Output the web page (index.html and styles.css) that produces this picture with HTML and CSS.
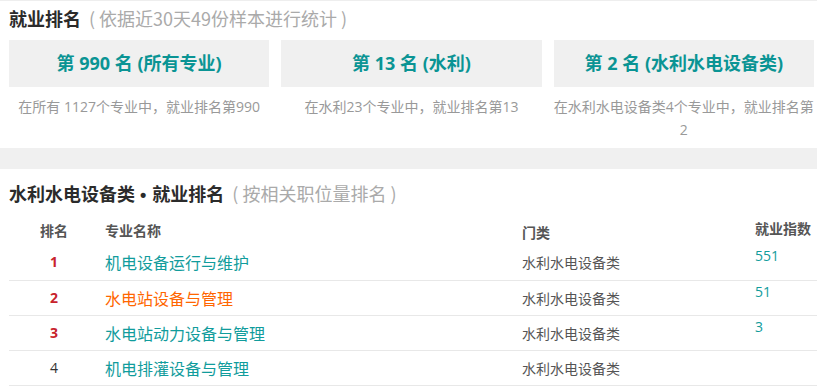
FILE: index.html
```html
<!DOCTYPE html>
<html lang="zh-CN">
<head>
<meta charset="utf-8">
<title>就业排名</title>
<link rel="stylesheet" href="styles.css">
</head>
<body>
<section class="rank-summary">
  <h2 class="sec-title">就业排名<span class="sec-sub">( 依据近30天49份样本进行统计 )</span></h2>
  <div class="cards">
    <div class="card">
      <div class="card-head">第 990 名 (所有专业)</div>
      <p class="card-desc">在所有 1127个专业中，就业排名第990</p>
    </div>
    <div class="card">
      <div class="card-head">第 13 名 (水利)</div>
      <p class="card-desc">在水利23个专业中，就业排名第13</p>
    </div>
    <div class="card">
      <div class="card-head">第 2 名 (水利水电设备类)</div>
      <p class="card-desc">在水利水电设备类4个专业中，就业排名第2</p>
    </div>
  </div>
</section>
<div class="band"></div>
<section class="rank-list">
  <h2 class="sec-title">水利水电设备类<span class="dot">•</span>就业排名<span class="sec-sub">( 按相关职位量排名 )</span></h2>
  <table class="rank-table">
    <colgroup>
      <col class="c-rank"><col class="c-name"><col class="c-cat"><col class="c-idx">
    </colgroup>
    <thead>
      <tr>
        <th class="th-rank">排名</th>
        <th class="th-name">专业名称</th>
        <th class="th-cat">门类</th>
        <th class="th-idx">就业指数</th>
      </tr>
    </thead>
    <tbody>
      <tr>
        <td class="rank top">1</td>
        <td class="name"><a>机电设备运行与维护</a></td>
        <td class="cat">水利水电设备类</td>
        <td class="idx">551</td>
      </tr>
      <tr>
        <td class="rank top">2</td>
        <td class="name"><a class="hover">水电站设备与管理</a></td>
        <td class="cat">水利水电设备类</td>
        <td class="idx">51</td>
      </tr>
      <tr>
        <td class="rank top">3</td>
        <td class="name"><a>水电站动力设备与管理</a></td>
        <td class="cat">水利水电设备类</td>
        <td class="idx">3</td>
      </tr>
      <tr>
        <td class="rank">4</td>
        <td class="name"><a>机电排灌设备与管理</a></td>
        <td class="cat">水利水电设备类</td>
        <td class="idx"></td>
      </tr>
    </tbody>
  </table>
</section>
</body>
</html>
```

FILE: styles.css
```css
html, body {
  margin: 0;
  padding: 0;
  background: #fff;
}
body {
  width: 817px;
  overflow: hidden;
  font-family: "Open Sans", "Noto Sans CJK SC", sans-serif;
  color: #333;
  border-top: 1px solid #eeeeee;
}
.sec-title {
  margin: 0;
  padding-left: 9px;
  font-size: 18px;
  line-height: 24px;
  font-weight: bold;
  color: #2b2b2b;
  font-family: "Noto Sans CJK SC", sans-serif;
}
.dot {
  font-family: "Liberation Sans", sans-serif;
  margin: 0 6px 0 5px;
}
.sec-sub {
  font-weight: normal;
  color: #aaa;
  margin-left: 8px;
  font-size: 18px;
}
.rank-summary .sec-title {
  padding-top: 5px;
}
.cards {
  display: grid;
  grid-template-columns: repeat(3, 1fr);
  column-gap: 12px;
  padding: 0 3px 0 9px;
  margin-top: 10px;
}
.card-head {
  height: 47px;
  line-height: 47px;
  background: #f0f0f0;
  text-align: center;
  font-size: 18px;
  font-weight: bold;
  color: #0a9494;
}
.card-desc {
  margin: 8px 0 7px;
  font-size: 14px;
  line-height: 23px;
  color: #999;
  text-align: center;
}
.band {
  height: 21px;
  background: #f0f0f0;
}
.rank-list .sec-title {
  padding-top: 12px;
}
.rank-table {
  margin: 8px 0 0 9px;
  width: 808px;
  border-collapse: collapse;
  table-layout: fixed;
  font-family: "Noto Sans CJK SC", sans-serif;
}
.c-rank { width: 90px; }
.c-name { width: 417px; }
.c-cat { width: 233px; }
.c-idx { width: 68px; }
.rank-table thead tr {
  height: 30px;
}
.rank-table th {
  padding: 0;
  font-size: 14px;
  line-height: 20px;
  font-weight: bold;
  color: #555;
  text-align: left;
  vertical-align: middle;
}
.rank-table th.th-rank { text-align: center; }
.rank-table th.th-name,
.rank-table th.th-cat,
.rank-table th.th-idx { padding-left: 6px; }
.rank-table th.th-cat { padding-top: 4px; }
.rank-table th.th-idx { padding-bottom: 4px; }
.rank-table tbody tr {
  height: 35px;
}
.rank-table td {
  padding: 0;
  line-height: 20px;
  border-bottom: 1px solid #e8e8e8;
  vertical-align: middle;
}
.rank {
  text-align: center;
  font-size: 14px;
  color: #333;
  font-family: "Open Sans", sans-serif;
}
.rank.top {
  color: #c8232c;
  font-weight: bold;
}
.rank-table td.name {
  padding-left: 6px;
  font-size: 16px;
}
.name a {
  color: #119c9c;
}
.name a.hover {
  color: #ff6600;
}
.rank-table td.cat {
  padding-left: 6px;
  font-size: 14px;
  color: #555;
}
.rank-table td.idx {
  padding: 1px 0 0 6px;
  vertical-align: top;
  font-size: 14px;
  color: #119c9c;
  font-family: "Open Sans", sans-serif;
}
```
